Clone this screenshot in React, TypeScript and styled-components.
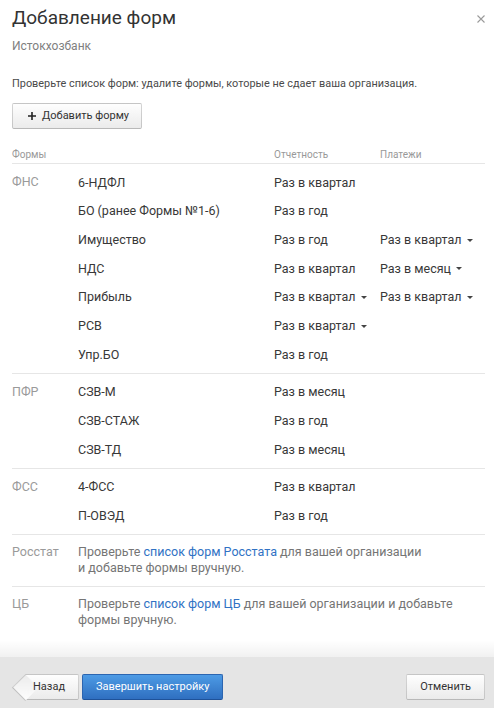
import React from 'react';
import styled, { createGlobalStyle } from 'styled-components';

const GlobalStyle = createGlobalStyle`
  html, body { margin: 0; padding: 0; background: #fff; }
  body {
    font-family: Roboto, "Liberation Sans", Arial, sans-serif;
    color: #333;
  }
  * { box-sizing: border-box; }
`;

const Modal = styled.div`
  width: 494px;
  height: 708px;
  display: flex;
  flex-direction: column;
  background: #fff;
  overflow: hidden;
`;

const Body = styled.div`
  flex: 1;
  padding: 4px 9px 0 12px;
`;

const Header = styled.header`
  display: flex;
  justify-content: space-between;
  align-items: flex-start;
`;

const Title = styled.h1`
  margin: 0;
  font-size: 19px;
  line-height: 28px;
  font-weight: 400;
  color: #333;
`;

const CloseButton = styled.button`
  border: 0;
  background: none;
  padding: 0;
  width: 16px;
  height: 16px;
  margin-top: 7px;
  margin-right: -4px;
  display: flex;
  align-items: center;
  justify-content: center;
  cursor: pointer;
`;

const Subtitle = styled.div`
  margin-top: 4px;
  font-size: 12px;
  line-height: 20px;
  color: #808080;
`;

const Intro = styled.p`
  margin: 18px 0 0;
  font-size: 10.9px;
  line-height: 20px;
  color: #4a4a4a;
`;

const Button = styled.button<{ $primary?: boolean }>`
  height: 26px;
  padding: 0 13px;
  border-radius: 2px;
  font-family: inherit;
  font-size: 11px;
  line-height: 24px;
  display: inline-flex;
  align-items: center;
  gap: 6px;
  cursor: pointer;
  border: 1px solid ${(p) => (p.$primary ? '#2c65b0' : 'rgba(0,0,0,0.16)')};
  border-bottom-color: ${(p) => (p.$primary ? '#1f5299' : 'rgba(0,0,0,0.27)')};
  background: ${(p) =>
    p.$primary
      ? 'linear-gradient(#4d9be5, #2f6fc0)'
      : 'linear-gradient(#fefefe, #ebebeb)'};
  color: ${(p) => (p.$primary ? '#fff' : '#333')};
`;

const AddButton = styled(Button)`
  margin-top: 9px;
  padding: 0 12px 0 15px;
`;

const BackButton = styled(Button)`
  position: relative;
  margin-left: 13px;
  padding: 0 13px 0 8px;
  border-left: 0;
  border-top-left-radius: 0;
  border-bottom-left-radius: 0;

  &::before {
    content: '';
    position: absolute;
    left: -9px;
    top: 2.8px;
    width: 17.5px;
    height: 17.5px;
    transform: rotate(45deg);
    background: linear-gradient(-45deg, #fdfdfd, #ececec);
    border-left: 1px solid rgba(0, 0, 0, 0.18);
    border-bottom: 1px solid rgba(0, 0, 0, 0.2);
  }
`;

const ButtonLabel = styled.span`
  position: relative;
`;

const Table = styled.div`
  margin-top: 18px;
`;

const HeadRow = styled.div`
  display: grid;
  grid-template-columns: 262px 106px 1fr;
  font-size: 10px;
  line-height: 16px;
  color: #999;
  border-bottom: 1px solid #e6e6e6;
`;

const Group = styled.div`
  display: grid;
  grid-template-columns: 66px 1fr;
  padding: 4px 0;
  border-bottom: 1px solid #e6e6e6;

  &:last-child {
    border-bottom: 0;
  }
`;

const GroupLabel = styled.div<{ $info?: boolean }>`
  font-size: 12.5px;
  color: #9a9a9a;
  line-height: ${(p) => (p.$info ? '16.5px' : '28.67px')};
  padding: ${(p) => (p.$info ? '5px 0' : '0')};
`;

const Row = styled.div`
  display: grid;
  grid-template-columns: 196px 106px 1fr;
  height: 28.67px;
  align-items: center;
  font-size: 12.5px;
  color: #383838;
`;

const Dropdown = styled.span`
  display: inline-flex;
  align-items: center;
  cursor: pointer;

  &::after {
    content: '';
    margin-left: 5px;
    margin-top: 1px;
    border-left: 3px solid transparent;
    border-right: 3px solid transparent;
    border-top: 3px solid #444;
  }
`;

const Info = styled.div`
  font-size: 12.5px;
  line-height: 16.5px;
  padding: 5px 0;
  color: #757575;
`;

const Link = styled.a`
  color: #3072c4;
  text-decoration: none;
`;

const Footer = styled.footer`
  position: relative;
  height: 51px;
  flex: none;
  background: #e5e5e5;
  padding: 17px 9px 0 12px;
  display: flex;
  align-items: flex-start;

  &::before {
    content: '';
    position: absolute;
    left: 0;
    right: 0;
    bottom: 100%;
    height: 17px;
    background: linear-gradient(rgba(0, 0, 0, 0), rgba(0, 0, 0, 0.055));
  }
`;

const FooterLeft = styled.div`
  display: flex;
  gap: 3px;
`;

const Spacer = styled.div`
  flex: 1;
`;

type FormRow = { name: string; report: string; reportDd?: boolean; pay?: string };
type FormGroup = { label: string; rows: FormRow[] };

const groups: FormGroup[] = [
  {
    label: 'ФНС',
    rows: [
      { name: '6-НДФЛ', report: 'Раз в квартал' },
      { name: 'БО (ранее Формы №1-6)', report: 'Раз в год' },
      { name: 'Имущество', report: 'Раз в год', pay: 'Раз в квартал' },
      { name: 'НДС', report: 'Раз в квартал', pay: 'Раз в месяц' },
      { name: 'Прибыль', report: 'Раз в квартал', reportDd: true, pay: 'Раз в квартал' },
      { name: 'РСВ', report: 'Раз в квартал', reportDd: true },
      { name: 'Упр.БО', report: 'Раз в год' },
    ],
  },
  {
    label: 'ПФР',
    rows: [
      { name: 'СЗВ-М', report: 'Раз в месяц' },
      { name: 'СЗВ-СТАЖ', report: 'Раз в год' },
      { name: 'СЗВ-ТД', report: 'Раз в месяц' },
    ],
  },
  {
    label: 'ФСС',
    rows: [
      { name: '4-ФСС', report: 'Раз в квартал' },
      { name: 'П-ОВЭД', report: 'Раз в год' },
    ],
  },
];

export default function App() {
  return (
    <>
      <GlobalStyle />
      <Modal>
        <Body>
          <Header>
            <Title>Добавление форм</Title>
            <CloseButton aria-label="Закрыть">
              <svg width="8" height="8" viewBox="0 0 8 8">
                <path d="M0.5 0.5 L7.5 7.5 M7.5 0.5 L0.5 7.5" stroke="#9a9a9a" strokeWidth="1.1" fill="none" />
              </svg>
            </CloseButton>
          </Header>
          <Subtitle>Истокхозбанк</Subtitle>
          <Intro>Проверьте список форм: удалите формы, которые не сдает ваша организация.</Intro>
          <AddButton>
            <svg width="8" height="8" viewBox="0 0 8 8">
              <path d="M4 0 V8 M0 4 H8" stroke="#222" strokeWidth="1.6" fill="none" />
            </svg>
            Добавить форму
          </AddButton>

          <Table>
            <HeadRow>
              <span>Формы</span>
              <span>Отчетность</span>
              <span>Платежи</span>
            </HeadRow>
            {groups.map((g) => (
              <Group key={g.label}>
                <GroupLabel>{g.label}</GroupLabel>
                <div>
                  {g.rows.map((r) => (
                    <Row key={r.name}>
                      <span>{r.name}</span>
                      <span>{r.reportDd ? <Dropdown>{r.report}</Dropdown> : r.report}</span>
                      <span>{r.pay ? <Dropdown>{r.pay}</Dropdown> : null}</span>
                    </Row>
                  ))}
                </div>
              </Group>
            ))}
            <Group>
              <GroupLabel $info>Росстат</GroupLabel>
              <Info>
                Проверьте <Link href="#">список форм Росстата</Link> для вашей организации
                <br />и добавьте формы вручную.
              </Info>
            </Group>
            <Group>
              <GroupLabel $info>ЦБ</GroupLabel>
              <Info>
                Проверьте <Link href="#">список форм ЦБ</Link> для вашей организации и добавьте формы вручную.
              </Info>
            </Group>
          </Table>
        </Body>
        <Footer>
          <FooterLeft>
            <BackButton>
              <ButtonLabel>Назад</ButtonLabel>
            </BackButton>
            <Button $primary>Завершить настройку</Button>
          </FooterLeft>
          <Spacer />
          <Button>Отменить</Button>
        </Footer>
      </Modal>
    </>
  );
}
